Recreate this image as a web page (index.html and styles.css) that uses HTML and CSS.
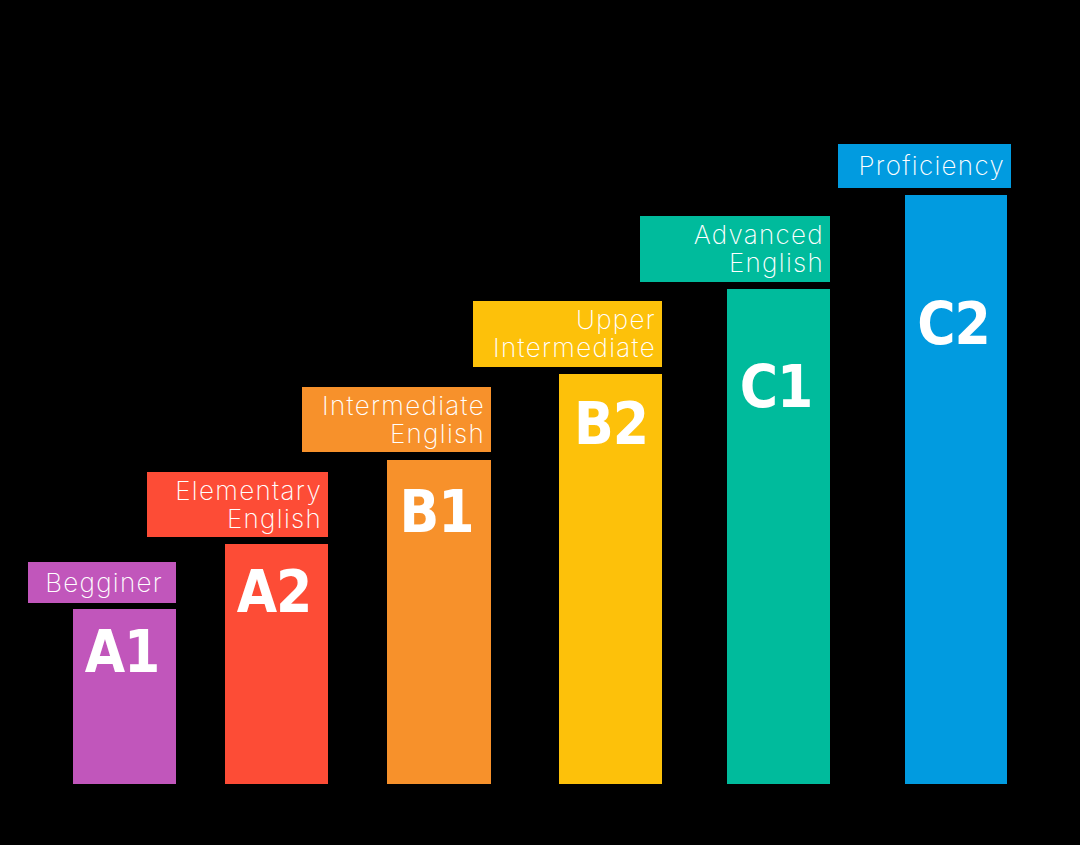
FILE: index.html
```html
<!DOCTYPE html>
<html lang="en">
<head>
<meta charset="utf-8">
<title>English levels</title>
<link rel="stylesheet" href="styles.css">
</head>
<body>
<div class="chart">
  <div class="col col-a1">
    <div class="label label-a1"><span>Begginer</span></div>
    <div class="bar bar-a1" style="height:175px"><span class="code">A1</span></div>
  </div>
  <div class="col col-a2">
    <div class="label label-a2"><span>Elementary</span><span>English</span></div>
    <div class="bar bar-a2" style="height:240px"><span class="code">A2</span></div>
  </div>
  <div class="col col-b1">
    <div class="label label-b1"><span>Intermediate</span><span>English</span></div>
    <div class="bar bar-b1" style="height:324px"><span class="code">B1</span></div>
  </div>
  <div class="col col-b2">
    <div class="label label-b2"><span>Upper</span><span>Intermediate</span></div>
    <div class="bar bar-b2" style="height:410px"><span class="code">B2</span></div>
  </div>
  <div class="col col-c1">
    <div class="label label-c1"><span>Advanced</span><span>English</span></div>
    <div class="bar bar-c1" style="height:495px"><span class="code">C1</span></div>
  </div>
  <div class="col col-c2">
    <div class="label label-c2"><span>Proficiency</span></div>
    <div class="bar bar-c2" style="height:589px"><span class="code">C2</span></div>
  </div>
</div>
</body>
</html>
```
FILE: styles.css
```css
html, body {
  margin: 0;
  padding: 0;
  background: #000;
}
body {
  width: 1080px;
  height: 845px;
  overflow: hidden;
}
.chart {
  display: flex;
  align-items: flex-end;
  height: 784px;
  padding-left: 73px;
}
.col {
  display: flex;
  flex-direction: column;
  width: 103px;
  flex: none;
}
.col-a2 { margin-left: 49px; }
.col-b1 { margin-left: 59px; width: 104px; }
.col-b2 { margin-left: 68px; }
.col-c1 { margin-left: 65px; }
.col-c2 { margin-left: 75px; width: 102px; }

.label {
  box-sizing: border-box;
  display: flex;
  flex-direction: column;
  justify-content: center;
  align-items: flex-end;
  padding-right: 6px;
  font-family: Inter, "Open Sans", sans-serif;
  font-weight: 200;
  font-size: 26px;
  line-height: 28px;
  color: #fff;
  letter-spacing: 1.3px;
}
.label-a1 { width: 148px; height: 41px; margin-left: -45px; margin-bottom: 6px; padding-right: 13px; background: #c156bb; }
.label-a2 { width: 181px; height: 65px; margin-left: -78px; margin-bottom: 7px; background: #fd4c36; }
.label-b1 { width: 189px; height: 65px; margin-left: -85px; margin-bottom: 8px; background: #f7912b; }
.label-b2 { width: 189px; height: 66px; margin-left: -86px; margin-bottom: 7px; background: #fdc10a; }
.label-c1 { width: 190px; height: 66px; margin-left: -87px; margin-bottom: 7px; background: #00bb9c; }
.label-c2 { width: 173px; height: 44px; margin-left: -67px; margin-bottom: 7px; background: #019be0; }

.bar {
  box-sizing: border-box;
  text-align: center;
  padding-right: 5px;
}
.code {
  display: block;
  font-family: "DejaVu Sans", Verdana, sans-serif;
  font-weight: bold;
  font-stretch: condensed;
  font-size: 58px;
  line-height: 58px;
  color: #fff;
  letter-spacing: -1px;
}
.bar-a1 { background: #c156bb; padding-top: 14px; }
.bar-a2 { background: #fd4c36; padding-top: 19px; }
.bar-b1 { background: #f7912b; padding-top: 23px; }
.bar-b2 { background: #fdc10a; padding-top: 21px; padding-right: 0; padding-left: 1px; }
.bar-c1 { background: #00bb9c; padding-top: 69px; }
.bar-c2 { background: #019be0; padding-top: 100px; }
```
